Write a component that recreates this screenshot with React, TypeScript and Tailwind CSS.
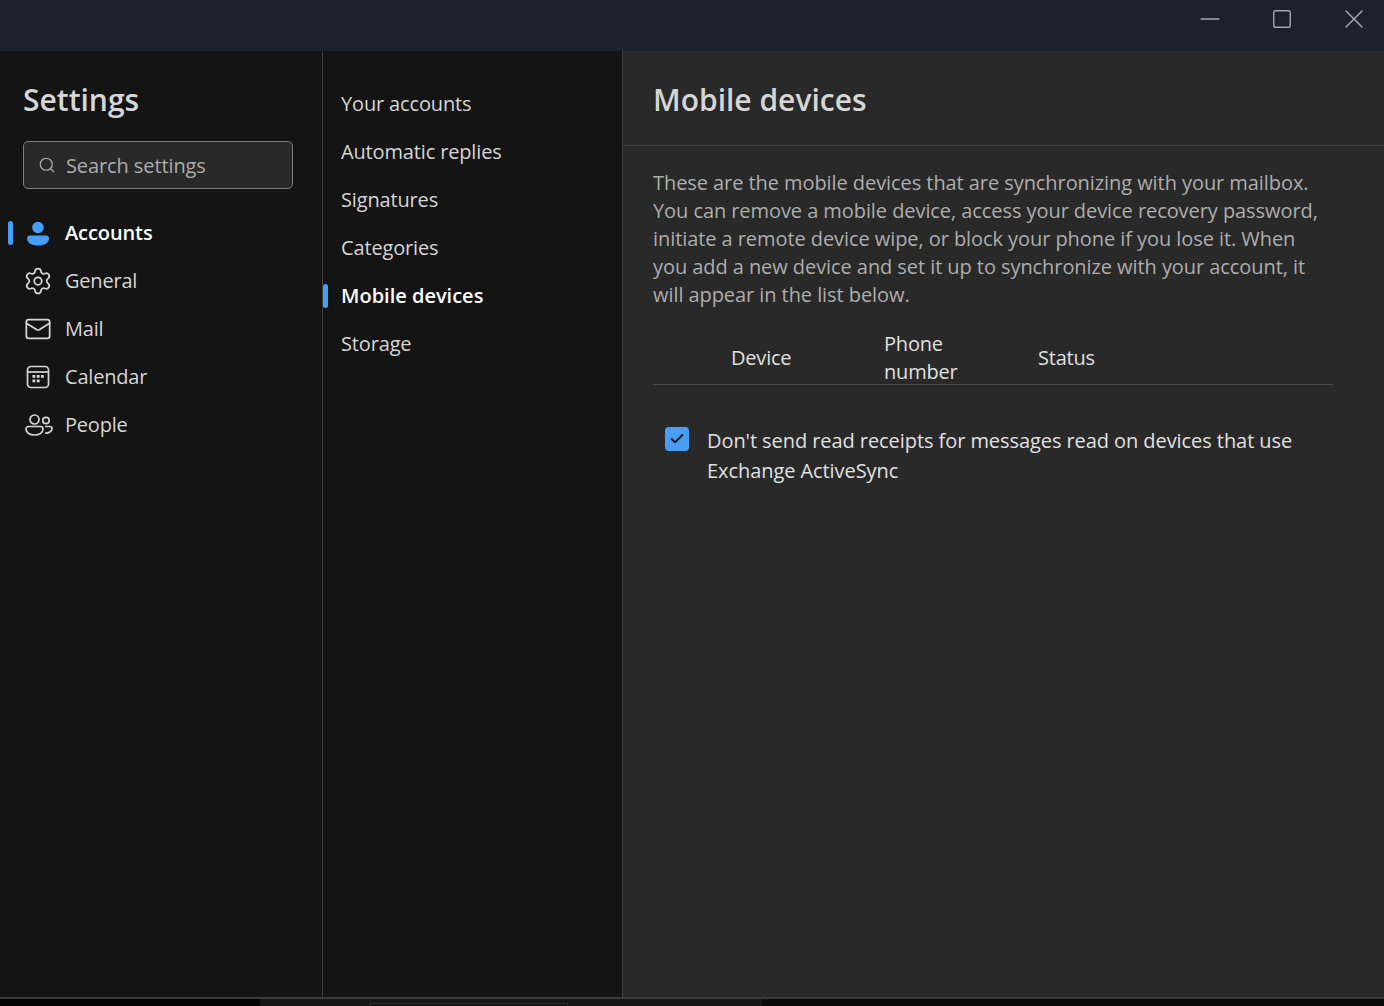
import { Check, Search, Settings, Mail, Minus, Square, X } from "lucide-react";
import type { ReactNode } from "react";

const font = { fontFamily: '"Open Sans", "Noto Sans", sans-serif' };

const CalendarGlyph = () => (
  <svg width="26" height="26" viewBox="0 0 26 26" fill="none" stroke="currentColor" strokeWidth="1.7">
    <rect x="2.500" y="2.500" width="21" height="21" rx="3.500" />
    <path d="M2.500 8h21" />
    <g fill="currentColor" stroke="none">
      <rect x="7.500" y="11" width="2.800" height="2.800" />
      <rect x="11.800" y="11" width="2.800" height="2.800" />
      <rect x="16" y="11" width="2.800" height="2.800" />
      <rect x="7.500" y="15.500" width="2.800" height="2.800" />
      <rect x="11.800" y="15.500" width="2.800" height="2.800" />
    </g>
  </svg>
);

const PeopleGlyph = () => (
  <svg width="28" height="26" viewBox="0 0 28 26" fill="none" stroke="currentColor" strokeWidth="1.7">
    <circle cx="9.500" cy="7.500" r="4.500" />
    <circle cx="21" cy="8.500" r="3.200" />
    <path d="M3.500 14.500h12a2.500 2.500 0 0 1 2.500 2.500c0 4-4 6-8.500 6S1 21 1 17a2.500 2.500 0 0 1 2.500-2.500Z" />
    <path d="M20 21c3.500.3 7-1.500 7-4.500a2 2 0 0 0-2-2h-5" />
  </svg>
);

const PersonGlyph = () => (
  <svg width="26" height="26" viewBox="0 0 26 26" fill="#479ef5">
    <circle cx="13" cy="7.500" r="5.800" />
    <path d="M5 15.500h16a3 3 0 0 1 3 3c0 4.500-5 7-11 7s-11-2.500-11-7a3 3 0 0 1 3-3Z" />
  </svg>
);

const NavItem = ({ icon, label, active }: { icon: ReactNode; label: string; active?: boolean }) => (
  <div className="relative flex h-12 items-center pl-[25px]">
    {active && <div className="absolute left-[8px] top-[12px] h-[24px] w-[5px] rounded-full bg-[#479ef5]" />}
    <div className="flex w-[40px] items-center text-[#d6d6d6]">{icon}</div>
    <span className={active ? "text-[20px] font-semibold tracking-[-0.1px] text-white" : "text-[20px] tracking-[-0.2px] text-[#d6d6d6]"}>
      {label}
    </span>
  </div>
);

const SubItem = ({ label, active }: { label: string; active?: boolean }) => (
  <div className="relative flex h-12 items-center pl-[18px]">
    {active && <div className="absolute left-0 top-[12px] h-[24px] w-[5px] rounded-full bg-[#479ef5]" />}
    <span className={active ? "text-[20px] font-semibold text-white" : "text-[20px] tracking-[-0.15px] text-[#d6d6d6]"}>
      {label}
    </span>
  </div>
);

export default function App() {
  return (
    <div className="flex h-[1006px] w-[1384px] flex-col overflow-hidden bg-[#0a0a0a]" style={font}>
      {/* title bar */}
      <div className="flex h-[51px] shrink-0 items-start justify-end bg-[#1b222d] text-[#a4a8ae]">
        <div className="-mr-[6px] flex">
          <div className="flex h-[38px] w-[72px] items-center justify-center">
            <Minus size={30} strokeWidth={1.200} />
          </div>
          <div className="flex h-[38px] w-[72px] items-center justify-center">
            <Square size={22} strokeWidth={1.500} />
          </div>
          <div className="flex h-[38px] w-[72px] items-center justify-center">
            <X size={32} strokeWidth={1.100} />
          </div>
        </div>
      </div>

      <div className="flex h-[948px] shrink-0 border-b-2 border-[#3a3a3a]">
        {/* left nav */}
        <div className="w-[323px] shrink-0 border-r border-[#3d3d3d] bg-[#141414]">
          <h1 className="pl-[23px] pt-[26px] text-[30px] leading-[46px] font-semibold text-[#d6d6d6]">Settings</h1>
          <div className="mx-[23px] mt-[18px] flex h-[48px] w-[270px] items-center rounded-[5px] border border-[#7d7d7d] bg-[#292929] pl-[14px] text-[#adadad]">
            <Search size={18} strokeWidth={1.600} />
            <span className="ml-[10px] pt-[2px] text-[20px] tracking-[-0.1px]">Search settings</span>
          </div>
          <div className="mt-[20px]">
            <NavItem active icon={<PersonGlyph />} label="Accounts" />
            <NavItem icon={<Settings size={30} strokeWidth={1.400} className="-ml-[2px]" />} label="General" />
            <NavItem icon={<Mail size={28} strokeWidth={1.500} className="-ml-[1px]" />} label="Mail" />
            <NavItem icon={<CalendarGlyph />} label="Calendar" />
            <NavItem icon={<PeopleGlyph />} label="People" />
          </div>
        </div>

        {/* sub nav */}
        <div className="w-[300px] shrink-0 border-r border-[#3d3d3d] bg-[#141414] pt-[29px]">
          <SubItem label="Your accounts" />
          <SubItem label="Automatic replies" />
          <SubItem label="Signatures" />
          <SubItem label="Categories" />
          <SubItem active label="Mobile devices" />
          <SubItem label="Storage" />
        </div>

        {/* content */}
        <div className="flex-1 bg-[#292929]">
          <div className="h-[95px] border-b border-[#3d3d3d] pl-[30px] pt-[26px]">
            <h2 className="text-[30px] leading-[46px] font-semibold text-[#d6d6d6]">Mobile devices</h2>
          </div>
          <div className="pl-[30px] pr-[51px]">
            <p className="mt-[23px] w-[680px] text-[20px] leading-[28px] tracking-[-0.07px] text-[#adadad]">
              These are the mobile devices that are synchronizing with your mailbox. You can remove a mobile device, access your device recovery password, initiate a remote device wipe, or block your phone if you lose it. When you add a new device and set it up to synchronize with your account, it will appear in the list below.
            </p>
            <div className="mt-[13px] flex h-[63px] items-center border-b border-[#4a4a4a] pt-[9px] text-[20px] leading-[28px] tracking-[-0.2px] text-[#e0e0e0]">
              <span className="ml-[78px] w-[153px]">Device</span>
              <span className="w-[154px]">Phone<br />number</span>
              <span>Status</span>
            </div>
            <div className="mt-[41px] flex items-start pl-[12px]">
              <div className="mt-[1px] flex h-[24px] w-[24px] shrink-0 items-center justify-center rounded-[4px] bg-[#479ef5]">
                <Check size={16} strokeWidth={2.800} className="text-[#141414]" />
              </div>
              <p className="ml-[18px] text-[20px] leading-[30px] tracking-[-0.07px] text-[#e0e0e0]">
                Don't send read receipts for messages read on devices that use<br />Exchange ActiveSync
              </p>
            </div>
          </div>
        </div>
      </div>

      {/* strip of the window underneath */}
      <div className="flex flex-1">
        <div className="w-[260px] bg-[#050505]" />
        <div className="w-[502px] bg-[#161616] pl-[110px] pt-[4px]">
          <div className="h-full w-[198px] border-t border-x border-[#2c2c2c]" />
        </div>
        <div className="flex-1 bg-[#0a0a0a]" />
      </div>
    </div>
  );
}
